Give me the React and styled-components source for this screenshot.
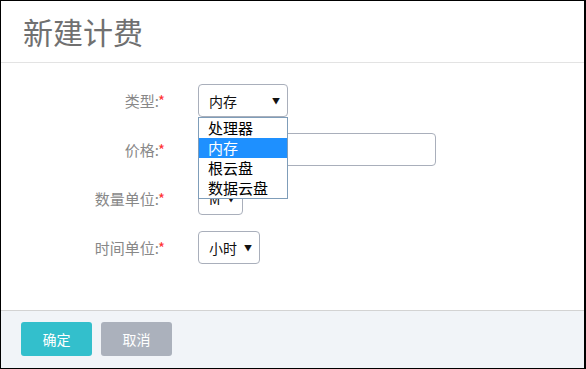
import styled, { createGlobalStyle } from "styled-components";

const GlobalStyle = createGlobalStyle`
  html, body {
    margin: 0;
    padding: 0;
    background: #fff;
  }
  body {
    font-family: "Noto Sans CJK SC", "Noto Sans", sans-serif;
  }
`;

// the whole dialog
const Frame = styled.div`
  box-sizing: border-box;
  width: 586px;
  height: 369px;
  border: 1px solid #000;
  border-right-width: 2px;
  display: flex;
  flex-direction: column;
  background: #fff;
`;

const Header = styled.div`
  height: 62px;
  box-sizing: border-box;
  border-bottom: 1px solid #e3e3e3;
  padding-left: 22px;
  display: flex;
  align-items: center;
`;

const Title = styled.h1`
  margin: 0;
  font-size: 30px;
  font-weight: 400;
  color: #707070;
  line-height: 1;
  padding-bottom: 2px;
`;

const Body = styled.div`
  flex: 1;
  padding: 21px 0 0 0;
`;

const Form = styled.div`
  display: grid;
  grid-template-columns: 164px auto;
  column-gap: 33px;
  row-gap: 16px;
  align-items: center;
`;

const Label = styled.div`
  text-align: right;
  font-size: 15px;
  color: #888;
  line-height: 33px;
  height: 33px;

  span {
    color: #f33;
  }
`;

const Field = styled.div`
  position: relative;
  justify-self: start;
`;

const Select = styled.div`
  box-sizing: border-box;
  width: ${(p) => p.$w}px;
  height: 33px;
  border: 1px solid #a9afbb;
  border-radius: 4px;
  display: flex;
  align-items: center;
  justify-content: space-between;
  padding: 0 7px 0 10px;
  font-size: 14px;
  color: #111;
  overflow: hidden;
  white-space: nowrap;
`;

const Arrow = styled.span`
  font-size: 8px;
  color: #111;
  margin-left: 6px;
`;

const Input = styled.div`
  box-sizing: border-box;
  width: 238px;
  height: 33px;
  border: 1px solid #a9afbb;
  border-radius: 4px;
`;

// the open option list of the type select
const Menu = styled.ul`
  position: absolute;
  top: 33px;
  left: 0;
  width: 90px;
  box-sizing: border-box;
  margin: 0;
  padding: 0;
  list-style: none;
  border: 1px solid #7f9db9;
  background: #fff;
  z-index: 2;
`;

const Option = styled.li`
  height: 20px;
  line-height: 20px;
  font-size: 15px;
  padding-left: 9px;
  color: ${(p) => (p.$active ? "#fff" : "#000")};
  background: ${(p) => (p.$active ? "#1e90ff" : "#fff")};
`;

const Footer = styled.div`
  height: 58px;
  box-sizing: border-box;
  border-top: 1px solid #d3d3d3;
  background: #f1f4f8;
  display: flex;
  align-items: center;
  gap: 9px;
  padding: 0 0 2px 20px;
`;

const Button = styled.button`
  width: 71px;
  height: 34px;
  border: none;
  border-radius: 3px;
  font-family: inherit;
  font-size: 14px;
  color: #fff;
  background: ${(p) => (p.$primary ? "#33bfcc" : "#abb1bc")};
  padding: 0;
`;

const options = ["处理器", "内存", "根云盘", "数据云盘"];

const App = () => {
  return (
    <>
      <GlobalStyle />
      <Frame>
        <Header>
          <Title>新建计费</Title>
        </Header>
        <Body>
          <Form>
            <Label>
              类型:<span>*</span>
            </Label>
            <Field>
              <Select $w={90}>
                内存<Arrow>▼</Arrow>
              </Select>
              <Menu>
                {options.map((o) => (
                  <Option key={o} $active={o === "内存"}>
                    {o}
                  </Option>
                ))}
              </Menu>
            </Field>

            <Label>
              价格:<span>*</span>
            </Label>
            <Field>
              <Input />
            </Field>

            <Label>
              数量单位:<span>*</span>
            </Label>
            <Field>
              <Select $w={45}>
                M<Arrow>▼</Arrow>
              </Select>
            </Field>

            <Label>
              时间单位:<span>*</span>
            </Label>
            <Field>
              <Select $w={62}>
                小时<Arrow>▼</Arrow>
              </Select>
            </Field>
          </Form>
        </Body>
        <Footer>
          <Button $primary>确定</Button>
          <Button>取消</Button>
        </Footer>
      </Frame>
    </>
  );
};

export default App;
